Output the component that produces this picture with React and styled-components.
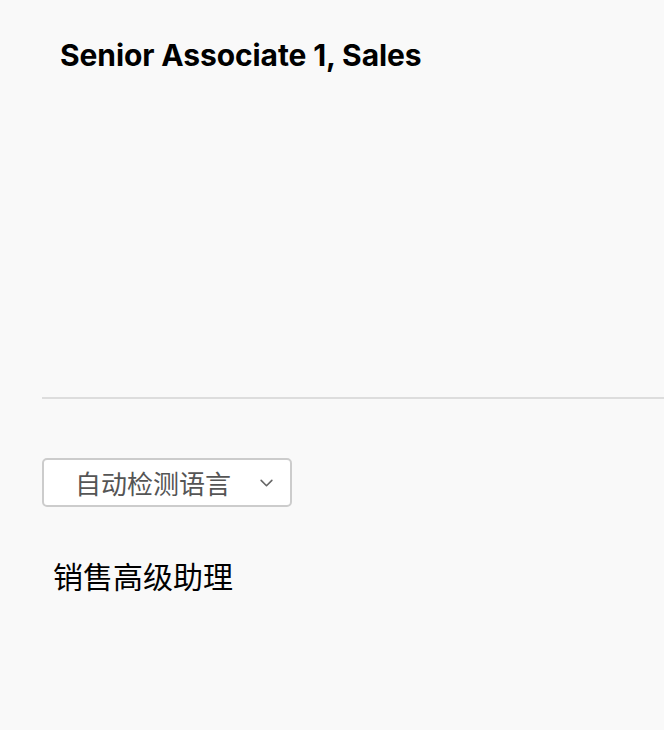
import React from "react";
import styled, { createGlobalStyle } from "styled-components";

const GlobalStyle = createGlobalStyle`
  html, body {
    margin: 0;
    padding: 0;
    background: #f9f9f9;
    font-family: Inter, "Noto Sans CJK SC", sans-serif;
  }
`;

const Page = styled.div`
  min-height: 730px;
  padding-left: 42px;
  background: #f9f9f9;
`;

const SourcePane = styled.section`
  height: 399px;
  border-bottom: 2px solid #dddddd;
  box-sizing: border-box;
  padding: 35px 0 0 18px;

  > h1 {
    margin: 0;
    font-size: 30px;
    font-weight: 700;
    color: #000;
    line-height: 40px;
    letter-spacing: -0.1px;
  }
`;

const TargetPane = styled.section`
  padding-top: 59px;
`;

const LangSelect = styled.button`
  display: flex;
  align-items: center;
  width: 250px;
  height: 49px;
  box-sizing: border-box;
  padding: 0 16px 0 31px;
  background: #fff;
  border: 2px solid #cccccc;
  border-radius: 5px;
  font-family: Inter, "Noto Sans CJK SC", sans-serif;
  font-size: 26px;
  color: #555;
  cursor: pointer;

  > span {
    flex: 1;
    text-align: left;
  }
`;

const Translation = styled.p`
  margin: 49px 0 0 11px;
  font-size: 30px;
  line-height: 42px;
  color: #000;
`;

function Chevron() {
  return (
    <svg width="15" height="15" viewBox="0 0 14 14" fill="none">
      <path d="M2 5l5 5 5-5" stroke="#666" strokeWidth="1.5" strokeLinecap="round" strokeLinejoin="round" />
    </svg>
  );
}

export default function App() {
  return (
    <Page>
      <GlobalStyle />
      <SourcePane>
        <h1>Senior Associate 1, Sales</h1>
      </SourcePane>
      <TargetPane>
        <LangSelect>
          <span>自动检测语言</span>
          <Chevron />
        </LangSelect>
        <Translation>销售高级助理</Translation>
      </TargetPane>
    </Page>
  );
}
